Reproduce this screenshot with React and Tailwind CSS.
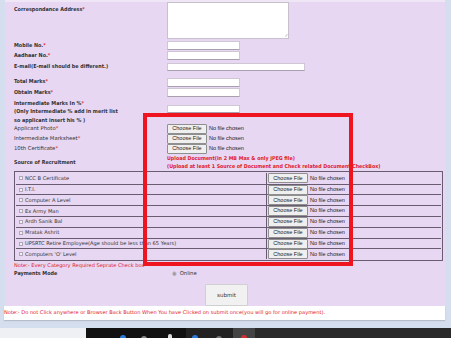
import React from "react";

const Inp = ({ w = "w-[73px]", h = "h-[9px]" }) => (
  <div className={`${w} ${h} bg-white border border-[#cfc8d4] border-b-[#a8a0ae]`} />
);

const FileIn = () => (
  <div className="flex items-center gap-[2px]" style={{ fontFamily: '"Liberation Sans", Arial, sans-serif' }}>
    <div className="h-[10px] w-[40px] bg-[#efefef] border border-[#8f8f8f] rounded-[1px] text-[5.5px] text-[#222] flex items-center justify-center leading-none">Choose File</div>
    <span className="text-[5.5px] text-[#222] leading-none">No file chosen</span>
  </div>
);

const Star = () => <span className="text-[#e0202a]">*</span>;

const B = ({ children, className = "w-[153px] leading-none" }) => (
  <div className={`text-[5.4px] font-bold ${className}`} style={{ fontFamily: '"DejaVu Sans Condensed", "DejaVu Sans", sans-serif' }}>{children}</div>
);

const rows = [
  "NCC B Certificate",
  "I.T.I.",
  "Computer A Level",
  "Ex Army Man",
  "Ardh Sanik Bal",
  "Mratak Ashrit",
  "UPSRTC Retire Employee(Age should be less than 65 Years)",
  "Computers 'O' Level",
];

export default function App() {
  return (
    <div className="relative w-[451px] h-[338px] overflow-hidden bg-[#d5deee]" style={{ fontFamily: '"DejaVu Sans", Verdana, sans-serif' }}>
      <div className="flex flex-col">
        <div className="ml-[5px] w-[440px] h-[306px] bg-[#e7d7f2] border-t-2 border-[#efe6f6] pl-[9px] flex flex-col text-[#333]">
          <div className="flex h-[38px]">
            <B className="w-[153px] leading-none pt-[5px]">Correspondance Address<Star /></B>
            <div className="w-[122px] h-[37px] bg-white border border-[#c8c0cc] relative">
              <span className="absolute right-[1px] bottom-0 text-[4px] text-[#999] leading-none">⁄⁄</span>
            </div>
          </div>
          <div className="flex h-[10px] items-center mt-[1px]">
            <B>Mobile No.<Star /></B>
            <Inp />
          </div>
          <div className="flex h-[10px] items-center">
            <B>Aadhaar No.<Star /></B>
            <Inp />
          </div>
          <div className="flex h-[10px] items-center mt-[2px]">
            <B>E-mail(E-mail should be different.)</B>
            <Inp w="w-[138px]" h="h-[8px]" />
          </div>
          <div className="flex h-[10px] items-center mt-[5px]">
            <B>Total Marks<Star /></B>
            <Inp />
          </div>
          <div className="flex h-[10px] items-center mt-[1px]">
            <B>Obtain Marks<Star /></B>
            <Inp />
          </div>
          <div className="flex h-[26px]">
            <B className="w-[153px] leading-[8.5px] pt-[1px]">
              Intermediate Marks In %<Star /><br />(Only Intermediate % add in merit list<br />so applicant insert his % )
            </B>
            <div className="pt-[7px]"><Inp h="h-[8px]" /></div>
          </div>
          <div className="flex h-[10px] items-center">
            <div className="w-[153px] text-[5.3px] leading-none">Applicant Photo<Star /></div>
            <FileIn />
          </div>
          <div className="flex h-[10px] items-center">
            <div className="w-[153px] text-[5.3px] leading-none">Intermediate Marksheet<Star /></div>
            <FileIn />
          </div>
          <div className="flex h-[10px] items-center">
            <div className="w-[153px] text-[5.3px] leading-none">10th Certificate<Star /></div>
            <FileIn />
          </div>
          <div className="flex h-[17px]">
            <B className="w-[153px] leading-none pt-[6px]">Source of Recruitment</B>
            <div className="text-[5.3px] font-bold text-[#e0202a] leading-[8.5px]" style={{ fontFamily: '"DejaVu Sans Condensed", "DejaVu Sans", sans-serif' }}>
              Upload Document(in 2 MB Max &amp; only JPEG file)<br />(Upload at least 1 Source of Document and Check related Document CheckBox)
            </div>
          </div>
          <div className="w-[429px] border border-[#6a5c70] p-[1px]">
            {rows.map((r, i) => (
              <div key={i} className={`flex h-[10.8px] ${i > 0 ? "border-t border-[#6a5c70]" : ""}`}>
                <div className="w-[251px] flex items-center gap-[2px] pl-[3px] border-r border-[#6a5c70] text-[5.1px] text-[#333] leading-none">
                  <div className="w-[4px] h-[4px] border border-[#b0a8b8] bg-[#f2eef6]" />
                  <span>{r}</span>
                </div>
                <div className="flex items-center pl-[1px]"><FileIn /></div>
              </div>
            ))}
          </div>
          <div className="h-[8px] flex items-center text-[5.1px] text-[#e0202a] leading-none">
            Note:- Every Category Required Seprate Check box
          </div>
          <div className="flex h-[9px] items-center">
            <B className="w-[158px] leading-none">Payments Mode</B>
            <div className="text-[5.3px] leading-none text-[#333]"><span className="text-[#999] mr-[3px]">◉</span>Online</div>
          </div>
          <div className="flex justify-center mt-[6px] pr-[6px]">
            <div className="w-[43px] h-[22px] bg-[#f1f1f1] border border-[#d0d0d0] rounded-[1px] flex items-center justify-center text-[5.5px] text-[#333]">submit</div>
          </div>
        </div>
        <div className="ml-[4px] w-[441px] h-[14px] bg-white flex items-center text-[5.1px] text-[#e0202a] leading-none shadow-[0_1px_1px_rgba(0,0,0,0.15)]">
          Note:- Do not Click anywhere or Browser Back Button When You have Clicked on submit once(you will go for online payment).
        </div>
        <div className="h-[8px]" />
        <div className="flex h-[10px]">
          <div className="w-[86px] bg-[#eef0f4]" />
          <div className="w-[100px] bg-[#111111] relative">
            <div className="absolute left-[34px] top-[7px] w-[6px] h-[6px] rounded-full bg-[#2a7ad8]" />
            <div className="absolute left-[55px] top-[8px] w-[6px] h-[6px] rounded-full bg-[#888]" />
            <div className="absolute left-[82px] top-[6px] w-[4px] h-[6px] rounded-sm bg-[#ddd]" />
          </div>
          <div className="w-[47px] bg-[#222] relative">
            <div className="absolute left-[6px] top-[7px] w-[6px] h-[6px] rounded-full bg-[#2a7ad8]" />
            <div className="absolute left-[30px] top-[8px] w-[6px] h-[6px] rounded-sm bg-[#777]" />
          </div>
          <div className="w-[22px] bg-[#444] relative">
            <div className="absolute left-[8px] top-[7px] w-[6px] h-[6px] rounded-sm bg-[#d03030]" />
          </div>
          <div className="flex-1 bg-[#2a2a2a]" />
        </div>
      </div>
      <div className="absolute left-[143px] top-[113px] w-[210px] h-[153px] border-[4px] border-[#ee1520]" />
    </div>
  );
}
